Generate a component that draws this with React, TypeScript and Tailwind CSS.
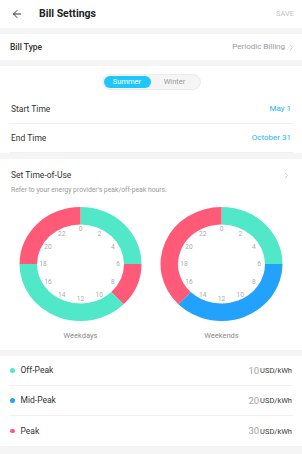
import { ChevronRight, ArrowLeft } from "lucide-react";

const TEAL = "#50e8c8";
const RED = "#ff5a78";
const BLUE = "#22a2fc";

type Seg = { from: number; to: number; color: string };

const weekdays: Seg[] = [
  { from: 0, to: 6, color: TEAL },
  { from: 6, to: 9, color: RED },
  { from: 9, to: 18, color: TEAL },
  { from: 18, to: 24, color: RED },
];

const weekends: Seg[] = [
  { from: 0, to: 6, color: TEAL },
  { from: 6, to: 15, color: BLUE },
  { from: 15, to: 24, color: RED },
];

const rates = [
  { name: "Off-Peak", value: "10", color: TEAL },
  { name: "Mid-Peak", value: "20", color: BLUE },
  { name: "Peak", value: "30", color: RED },
];

// ring is a bit wider than tall in the design
const CX = 70.5;
const CY = 61;
const RX = 61;
const RY = 57;
const IRX = 43.5;
const IRY = 39.5;

function pt(h: number, rx: number, ry: number) {
  const a = (h / 24) * Math.PI * 2;
  return [CX + rx * Math.sin(a), CY - ry * Math.cos(a)];
}

function segPath(s: Seg) {
  const large = s.to - s.from > 12 ? 1 : 0;
  const [x1, y1] = pt(s.from, RX, RY);
  const [x2, y2] = pt(s.to, RX, RY);
  const [x3, y3] = pt(s.to, IRX, IRY);
  const [x4, y4] = pt(s.from, IRX, IRY);
  return `M${x1} ${y1} A${RX} ${RY} 0 ${large} 1 ${x2} ${y2} L${x3} ${y3} A${IRX} ${IRY} 0 ${large} 0 ${x4} ${y4} Z`;
}

function Clock({ segs, label }: { segs: Seg[]; label: string }) {
  const hours = [0, 2, 4, 6, 8, 10, 12, 14, 16, 18, 20, 22];
  return (
    <div className="flex flex-1 flex-col items-center">
      <svg width="141" height="120" viewBox="0 0 141 120">
        {segs.map((s) => (
          <path key={s.from} d={segPath(s)} fill={s.color} />
        ))}
        {hours.map((h) => {
          const [x, y] = pt(h, 37.5, 35);
          return (
            <text
              key={h}
              x={x}
              y={y + 2.4}
              textAnchor="middle"
              fontSize="6.6"
              fill="#ababab"
              fontFamily="Roboto, sans-serif"
            >
              {h}
            </text>
          );
        })}
      </svg>
      <p className="mt-[7px] text-[7.5px] text-[#8a8a8a]">{label}</p>
    </div>
  );
}

export default function App() {
  return (
    <main
      className="min-h-[454px] w-[302px] bg-[#f5f5f5] text-[#333]"
      style={{ fontFamily: "Roboto, 'Liberation Sans', sans-serif" }}
    >
      <header className="flex h-[28px] items-center bg-white pl-[11px] pr-[8px]">
        <ArrowLeft className="h-[12px] w-[12px] text-[#333]" strokeWidth={2} />
        <h1 className="ml-[16px] text-[10.5px] font-bold text-[#222]">Bill Settings</h1>
        <span className="ml-auto text-[7.5px] text-[#c4c4c4]">SAVE</span>
      </header>

      <section className="mt-[6px] flex h-[26px] items-center bg-white pl-[10px] pr-[6px]">
        <span className="text-[8.5px] font-medium text-[#333]">Bill Type</span>
        <span className="ml-auto text-[8px] text-[#9a9a9a]">Periodic Billing</span>
        <ChevronRight className="ml-[2px] h-[9px] w-[9px] text-[#b5b5b5]" />
      </section>

      <section className="mt-[6px] bg-white pt-[8px]">
        <div className="flex justify-center">
          <div className="flex h-[16px] w-[99px] items-center rounded-full border border-[#ececec] bg-[#f5f5f5] p-[1px]">
            <div className="flex h-full w-[47px] items-center justify-center rounded-full bg-[#1ec6fb] text-[7.5px] text-white">
              Summer
            </div>
            <div className="flex flex-1 items-center justify-center text-[7.5px] text-[#9a9a9a]">Winter</div>
          </div>
        </div>
        <div className="mt-[5px] px-[9px]">
          <div className="flex h-[29px] items-center border-b border-[#f0f0f0] px-[2px]">
            <span className="text-[8.5px] text-[#333]">Start Time</span>
            <span className="ml-auto text-[8px] text-[#22b7f6]">May 1</span>
          </div>
          <div className="flex h-[29px] items-center border-b border-[#f0f0f0] px-[2px]">
            <span className="text-[8.5px] text-[#333]">End Time</span>
            <span className="ml-auto text-[8px] text-[#22b7f6]">October 31</span>
          </div>
        </div>
      </section>

      <section className="mt-[6px] bg-white px-[10px] pt-[10px] pb-[9px]">
        <div className="flex items-center px-[1px]">
          <span className="text-[8.5px] text-[#333]">Set Time-of-Use</span>
          <ChevronRight className="ml-auto h-[9px] w-[9px] text-[#b5b5b5]" />
        </div>
        <p className="mt-[3px] px-[1px] text-[6.8px] text-[#9a9a9a]">
          Refer to your energy provider's peak/off-peak hours.
        </p>
        <div className="mt-[8px] flex">
          <Clock segs={weekdays} label="Weekdays" />
          <Clock segs={weekends} label="Weekends" />
        </div>
      </section>

      <section className="mt-[6px] bg-white px-[9px]">
        {rates.map((r, i) => (
          <div
            key={r.name}
            className={`flex h-[30px] items-center px-[1px] ${i < 2 ? "border-b border-[#f0f0f0]" : ""}`}
          >
            <span className="h-[4.5px] w-[4.5px] rounded-full" style={{ backgroundColor: r.color }} />
            <span className="ml-[6px] text-[8.5px] text-[#333]">{r.name}</span>
            <span className="ml-auto text-[9.5px] text-[#a5a5a5]">{r.value}</span>
            <span className="ml-[1px] text-[7.5px] text-[#3a3a3a]">USD/kWh</span>
          </div>
        ))}
      </section>
    </main>
  );
}
